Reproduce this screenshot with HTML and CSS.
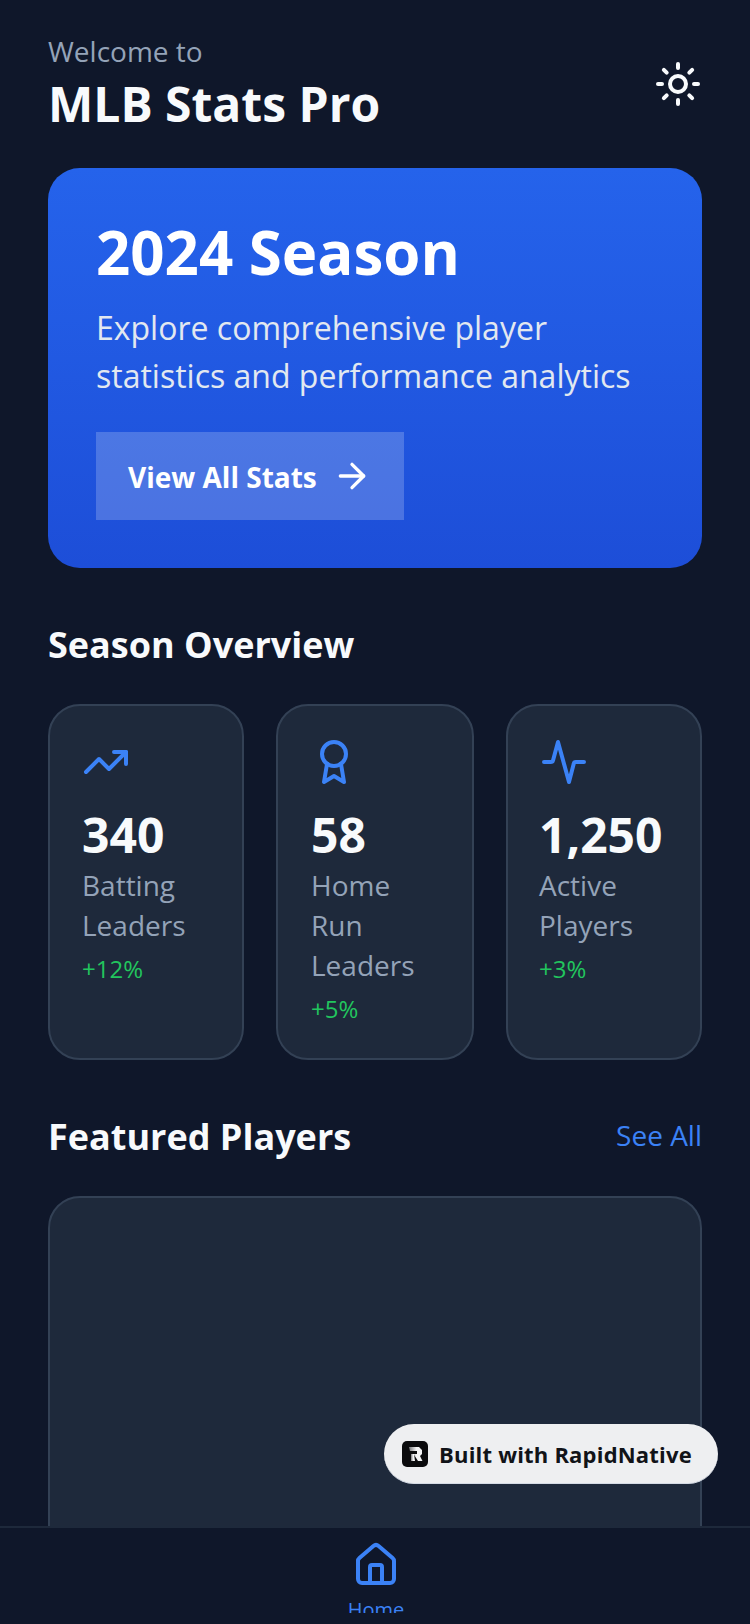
FILE: index.html
```html
<!DOCTYPE html>
<html lang="en">
<head>
  <meta charset="UTF-8">
  <meta name="viewport" content="width=device-width, initial-scale=1.0">
  <title>MLB Stats Pro</title>
  <link rel="stylesheet" href="styles.css">
</head>
<body>

  <div class="app">
    <div class="content">

      <!-- Header -->
      <div class="header">
        <div>
          <div class="welcome">Welcome to</div>
          <div class="app-title">MLB Stats Pro</div>
        </div>
        <svg class="theme-icon" viewBox="0 0 24 24" fill="none" stroke="#f8fafc" stroke-width="2" stroke-linecap="round" stroke-linejoin="round">
          <circle cx="12" cy="12" r="4"></circle>
          <path d="M12 2v2"></path>
          <path d="M12 20v2"></path>
          <path d="m4.93 4.93 1.41 1.41"></path>
          <path d="m17.66 17.66 1.41 1.41"></path>
          <path d="M2 12h2"></path>
          <path d="M20 12h2"></path>
          <path d="m6.34 17.66-1.41 1.41"></path>
          <path d="m19.07 4.93-1.41 1.41"></path>
        </svg>
      </div>

      <!-- Hero -->
      <div class="hero">
        <div class="hero-title">2024 Season</div>
        <div class="hero-text">Explore comprehensive player statistics and performance analytics</div>
        <div class="hero-button">
          <span class="hero-button-text">View All Stats</span>
          <svg class="hero-arrow" viewBox="0 0 24 24" fill="none" stroke="#fff" stroke-width="2" stroke-linecap="round" stroke-linejoin="round">
            <path d="M5 12h14"></path>
            <path d="m12 5 7 7-7 7"></path>
          </svg>
        </div>
      </div>

      <!-- Season Overview -->
      <div class="section-title overview-title">Season Overview</div>
      <div class="stats">
        <div class="stat-card">
          <svg class="stat-icon" viewBox="0 0 24 24" fill="none" stroke="#3b82f6" stroke-width="2" stroke-linecap="round" stroke-linejoin="round">
            <path d="M22 7 13.5 15.5 8.5 10.5 2 17"></path>
            <path d="M16 7h6v6"></path>
          </svg>
          <div class="stat-body">
            <div class="stat-value">340</div>
            <div class="stat-label">Batting Leaders</div>
            <div class="stat-change">+12%</div>
          </div>
        </div>
        <div class="stat-card">
          <svg class="stat-icon" viewBox="0 0 24 24" fill="none" stroke="#3b82f6" stroke-width="2" stroke-linecap="round" stroke-linejoin="round">
            <circle cx="12" cy="8" r="6"></circle>
            <path d="M15.477 12.89 17 22l-5-3-5 3 1.523-9.11"></path>
          </svg>
          <div class="stat-body">
            <div class="stat-value">58</div>
            <div class="stat-label">Home Run Leaders</div>
            <div class="stat-change">+5%</div>
          </div>
        </div>
        <div class="stat-card">
          <svg class="stat-icon" viewBox="0 0 24 24" fill="none" stroke="#3b82f6" stroke-width="2" stroke-linecap="round" stroke-linejoin="round">
            <path d="M2 12h3.5c.5 0 .9-.3 1-.8L9 2l5.5 20 2.4-9.2c.1-.5.5-.8 1-.8H22"></path>
          </svg>
          <div class="stat-body">
            <div class="stat-value">1,250</div>
            <div class="stat-label">Active Players</div>
            <div class="stat-change">+3%</div>
          </div>
        </div>
      </div>

      <!-- Featured Players -->
      <div class="section-row">
        <div class="section-title">Featured Players</div>
        <div class="see-all">See All</div>
      </div>
      <div class="player-card"></div>

    </div>

    <!-- Badge -->
    <div class="badge">
      <svg class="badge-logo" viewBox="0 0 26 26">
        <defs>
          <linearGradient id="logoFade" x1="0" y1="0" x2="1" y2="0">
            <stop offset="0" stop-color="#77777a"></stop>
            <stop offset="0.55" stop-color="#f4f4f5"></stop>
          </linearGradient>
        </defs>
        <rect width="26" height="26" rx="5" fill="#0b0b0d"></rect>
        <path d="M7 6h10l3 3v4l-2 2 2.500 5h-4.500l-4.500-7h3.500v-3H8z" fill="url(#logoFade)"></path>
        <path d="M9 13h3l1 7H9z" fill="url(#logoFade)"></path>
      </svg>
      <span>Built with RapidNative</span>
    </div>

    <!-- Bottom nav -->
    <div class="tabbar">
      <div class="tab">
        <svg class="tab-icon" viewBox="0 0 24 24" fill="none" stroke="#3b82f6" stroke-width="2" stroke-linecap="round" stroke-linejoin="round">
          <path d="M15 21v-8a1 1 0 0 0-1-1h-4a1 1 0 0 0-1 1v8"></path>
          <path d="M3 10a2 2 0 0 1 .709-1.528l7-5.999a2 2 0 0 1 2.582 0l7 5.999A2 2 0 0 1 21 10v9a2 2 0 0 1-2 2H5a2 2 0 0 1-2-2z"></path>
        </svg>
        <div class="tab-label">Home</div>
      </div>
    </div>
  </div>

</body>
</html>
```
FILE: styles.css
```css
body {
  font-family: "Open Sans", sans-serif;
  background-color: #0f172a;
  color: #f8fafc;
  margin: 0;
  padding: 0;
}

.app {
  position: relative;
  width: 750px;
  height: 1624px;
  overflow: hidden;
  display: flex;
  flex-direction: column;
}

.content {
  flex: 1;
  min-height: 0;
  overflow: hidden;
  padding: 31px 48px 0;
}

.header {
  display: flex;
  justify-content: space-between;
  align-items: center;
}

.welcome {
  font-size: 28px;
  line-height: 40px;
  color: #94a3b8;
}

.app-title {
  font-size: 48px;
  line-height: 64px;
  font-weight: 700;
  margin-top: 1px;
}

.theme-icon {
  width: 48px;
  height: 48px;
}

.hero {
  margin-top: 32px;
  padding: 48px;
  height: 400px;
  box-sizing: border-box;
  border-radius: 32px;
  background: linear-gradient(180deg, #2563eb, #1d4ed8);
}

.hero-title {
  font-size: 60px;
  line-height: 72px;
  font-weight: 700;
  color: #fff;
}

.hero-text {
  margin-top: 16px;
  font-size: 32px;
  line-height: 48px;
  color: #e2e8f0;
}

.hero-button {
  display: inline-flex;
  align-items: center;
  gap: 15px;
  margin-top: 32px;
  padding: 0 32px;
  height: 88px;
  background-color: rgba(255, 255, 255, 0.2);
  color: #fff;
  font-size: 28px;
  font-weight: 700;
}

.hero-button-text {
  padding-top: 2px;
}

.hero-arrow {
  width: 40px;
  height: 40px;
}

.section-title {
  font-size: 36px;
  line-height: 48px;
  font-weight: 700;
}

.overview-title {
  margin-top: 53px;
}

.stats {
  display: grid;
  grid-template-columns: 196px 198px 196px;
  gap: 32px;
  margin-top: 35px;
}

.stat-card {
  height: 356px;
  box-sizing: border-box;
  padding: 32px;
  background-color: #1e293b;
  border: 2px solid #334155;
  border-radius: 32px;
}

.stat-card:nth-child(2) .stat-body {
  margin-left: 1px;
}

.stat-card:nth-child(3) .stat-body {
  margin-left: -1px;
}

.stat-icon {
  display: block;
  width: 48px;
  height: 48px;
}

.stat-value {
  margin-top: 19px;
  font-size: 48px;
  line-height: 60px;
  font-weight: 700;
}

.stat-label {
  font-size: 28px;
  line-height: 40px;
  color: #94a3b8;
}

.stat-change {
  margin-top: 8px;
  font-size: 24px;
  line-height: 32px;
  color: #22c55e;
}

.section-row {
  display: flex;
  justify-content: space-between;
  align-items: center;
  margin-top: 53px;
}

.see-all {
  font-size: 28px;
  color: #3b82f6;
  padding-bottom: 4px;
}

.player-card {
  margin-top: 35px;
  height: 600px;
  box-sizing: border-box;
  background-color: #1e293b;
  border: 2px solid #334155;
  border-radius: 32px;
}

.badge {
  position: absolute;
  left: 384px;
  top: 1424px;
  width: 334px;
  height: 60px;
  box-sizing: border-box;
  display: flex;
  align-items: center;
  gap: 11px;
  padding-left: 18px;
  background-color: #eeeff1;
  border-bottom: 1px solid #d5dbe5;
  border-radius: 30px;
  color: #111318;
  font-size: 22px;
  font-weight: 700;
  letter-spacing: 0.2px;
}

.badge-logo {
  width: 26px;
  height: 26px;
}

.tabbar {
  flex-shrink: 0;
  height: 98px;
  box-sizing: border-box;
  border-top: 2px solid #1e293b;
  background-color: #0f172a;
}

/* the label is clipped here, same as the app's tab bar */
.tab {
  height: 85px;
  box-sizing: border-box;
  overflow: hidden;
  display: flex;
  flex-direction: column;
  align-items: center;
  padding: 13px 0 0 2px;
}

.tab-icon {
  flex-shrink: 0;
  width: 48px;
  height: 48px;
}

.tab-label {
  margin-top: 7px;
  font-size: 20px;
  line-height: 28px;
  color: #3b82f6;
}
```
